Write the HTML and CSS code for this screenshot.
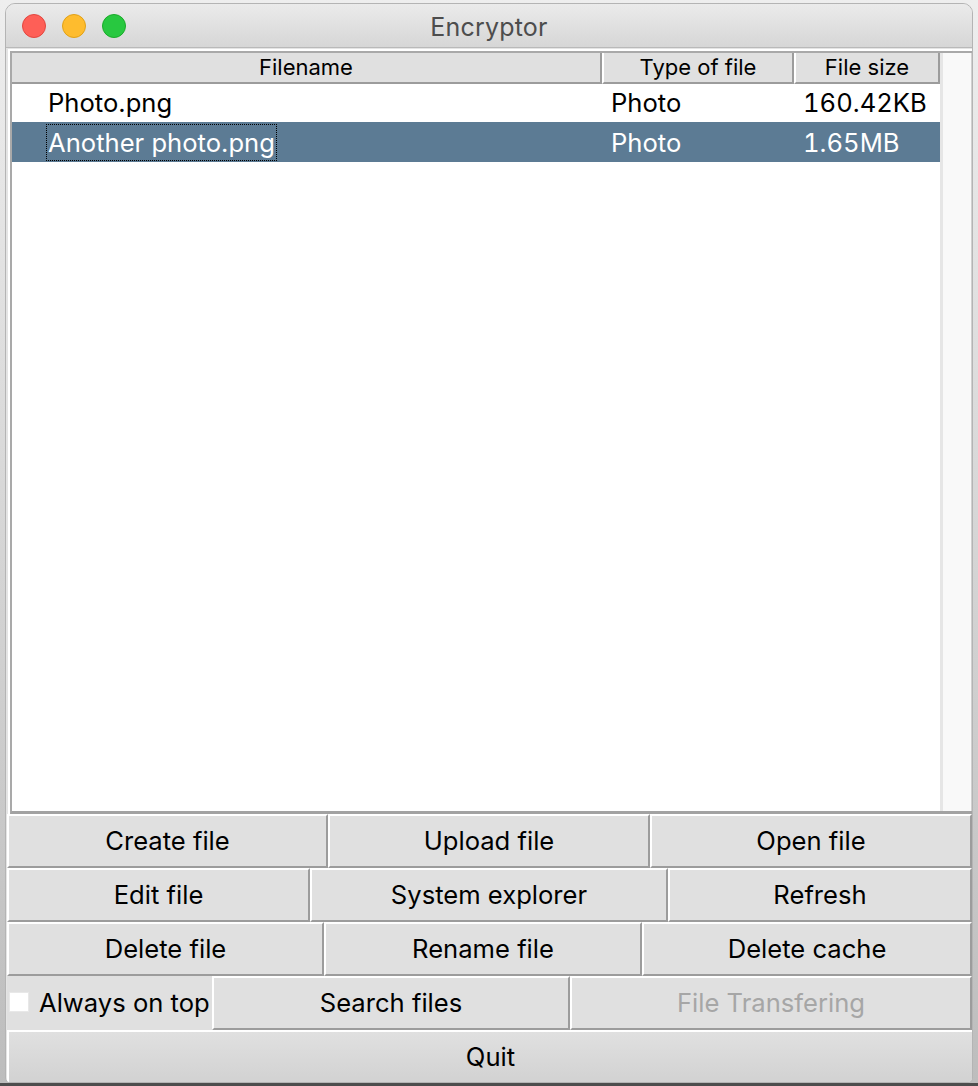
FILE: index.html
```html
<!DOCTYPE html>
<html lang="en">
<head>
<meta charset="utf-8">
<title>Encryptor</title>
<link rel="stylesheet" href="styles.css">
</head>
<body>
<div class="window">
  <div class="titlebar">
    <div class="lights">
      <span class="light red"></span>
      <span class="light yellow"></span>
      <span class="light green"></span>
    </div>
    <div class="title">Encryptor</div>
    <div class="spacer"></div>
  </div>
  <div class="content">
    <div class="tree">
      <div class="tree-inner">
        <div class="list">
          <div class="header">
            <div class="hcell first">Filename</div>
            <div class="hcell">Type of file</div>
            <div class="hcell">File size</div>
          </div>
          <div class="row">
            <div class="cell name"><span class="label">Photo.png</span></div>
            <div class="cell type">Photo</div>
            <div class="cell size">160.42KB</div>
          </div>
          <div class="row selected">
            <div class="cell name"><span class="label focus">Another photo.png</span></div>
            <div class="cell type">Photo</div>
            <div class="cell size">1.65MB</div>
          </div>
        </div>
        <div class="scrollbar"></div>
      </div>
    </div>
    <div class="buttons">
      <div class="brow r1">
        <button class="btn">Create file</button>
        <button class="btn">Upload file</button>
        <button class="btn">Open file</button>
      </div>
      <div class="brow r2">
        <button class="btn">Edit file</button>
        <button class="btn">System explorer</button>
        <button class="btn">Refresh</button>
      </div>
      <div class="brow r3">
        <button class="btn">Delete file</button>
        <button class="btn">Rename file</button>
        <button class="btn">Delete cache</button>
      </div>
      <div class="brow r4">
        <label class="check"><span class="box"></span><span>Always on top</span></label>
        <button class="btn">Search files</button>
        <button class="btn disabled">File Transfering</button>
      </div>
      <div class="brow r5">
        <button class="btn quit">Quit</button>
      </div>
    </div>
  </div>
</div>
</body>
</html>
```
FILE: styles.css
```css
* { box-sizing: border-box; }

html, body {
  margin: 0;
  padding: 0;
}

body {
  width: 978px;
  height: 1086px;
  overflow: hidden;
  padding: 3px 0 0 5px;
  background: linear-gradient(to bottom, #eeeeee 0, #bdbdbd 1083px, #4d4d4d 1083px, #4d4d4d 1086px);
  font-family: Inter, "Noto Sans", "Liberation Sans", sans-serif;
  color: #000;
}

.window {
  width: 968px;
  height: 1080px;
  border: 1px solid #b4b4b4;
  border-radius: 10px 10px 5px 5px;
  overflow: hidden;
  background: #e4e4e4;
  display: flex;
  flex-direction: column;
}

/* title bar */
.titlebar {
  height: 44px;
  flex: 0 0 44px;
  display: grid;
  grid-template-columns: 1fr auto 1fr;
  align-items: center;
  background: linear-gradient(to bottom, #ebebeb, #d6d6d6);
  border-bottom: 1px solid #b9b9b9;
}

.lights {
  display: flex;
  gap: 16px;
  padding-left: 16px;
}

.light {
  width: 24px;
  height: 24px;
  border-radius: 50%;
  display: block;
}

.red { background: #fe5f57; border: 1px solid #e2463f; }
.yellow { background: #febc2e; border: 1px solid #e1a116; }
.green { background: #28c840; border: 1px solid #1aab29; }

.title {
  font-size: 25px;
  color: #4d4d4d;
  letter-spacing: 0.2px;
  padding-top: 2px;
}

/* content */
.content {
  flex: 1;
  display: flex;
  flex-direction: column;
  padding-left: 1px;
}

.tree {
  margin: 1px 0 0 1px;
  height: 765px;
  border-top: 2px solid #ffffff;
  border-left: 2px solid #ffffff;
  background: #ffffff;
}

.tree-inner {
  height: 100%;
  display: flex;
  border-top: 2px solid #a9a9a9;
  border-left: 2px solid #a9a9a9;
  border-bottom: 3px solid #a2a2a2;
}

.list {
  width: 928px;
  background: #ffffff;
}

.header {
  display: grid;
  grid-template-columns: 590px 192px 146px;
  height: 29px;
}

.hcell {
  background: #e0e0e0;
  border-left: 2px solid #ffffff;
  border-right: 2px solid #9c9c9c;
  border-bottom: 2px solid #9c9c9c;
  text-align: center;
  font-size: 22px;
  line-height: 29px;
}

.hcell.first { border-left: none; }

.row {
  display: grid;
  grid-template-columns: 590px 192px 146px;
  height: 40px;
  align-items: center;
  font-size: 25.6px;
}

.row.selected {
  background: #5c7b94;
  color: #ffffff;
}

.cell.name { padding-left: 34px; }
.cell.type { padding-left: 9px; }
.cell.size {
  padding-left: 9px;
  font-feature-settings: "tnum" 1;
}

.label {
  display: inline-block;
  padding: 2px 1px;
  border: 1px solid transparent;
}

.label.focus {
  border: 1px dotted #000000;
}

.scrollbar {
  flex: 1;
  background: #f9f9f9;
  border-left: 3px solid #e6e6e6;
  border-right: 1px solid #d0d0d0;
}

/* buttons */
.buttons {
  display: flex;
  flex-direction: column;
}

.brow {
  display: grid;
  height: 54px;
}

.r1 { grid-template-columns: 321fr 322fr 322fr; }
.r2 { grid-template-columns: 303fr 358fr 304fr; }
.r3 { grid-template-columns: 317fr 318fr 330fr; }
.r4 { grid-template-columns: 205fr 358fr 402fr; }
.r5 { grid-template-columns: 1fr; height: 52px; }

.btn {
  margin: 0;
  padding: 0 0 2px 0;
  font: inherit;
  font-size: 25.6px;
  color: #000;
  background: #e0e0e0;
  border-style: solid;
  border-width: 2px;
  border-color: #ffffff #9c9c9c #9c9c9c #ffffff;
  text-align: center;
}

.btn.disabled { color: #a6a6a6; }

.btn.quit {
  background: linear-gradient(to bottom, #e0e0e0, #d2d2d2);
  border-right: none;
  border-bottom: none;
}

.check {
  display: flex;
  align-items: center;
  background: #e0e0e0;
  padding-left: 2px;
  gap: 10px;
  font-size: 25.6px;
  border-bottom: 2px solid #e0e0e0;
}

.box {
  width: 20px;
  height: 20px;
  background: #ffffff;
  border: 1px solid #e8e8e8;
  display: block;
}
```
